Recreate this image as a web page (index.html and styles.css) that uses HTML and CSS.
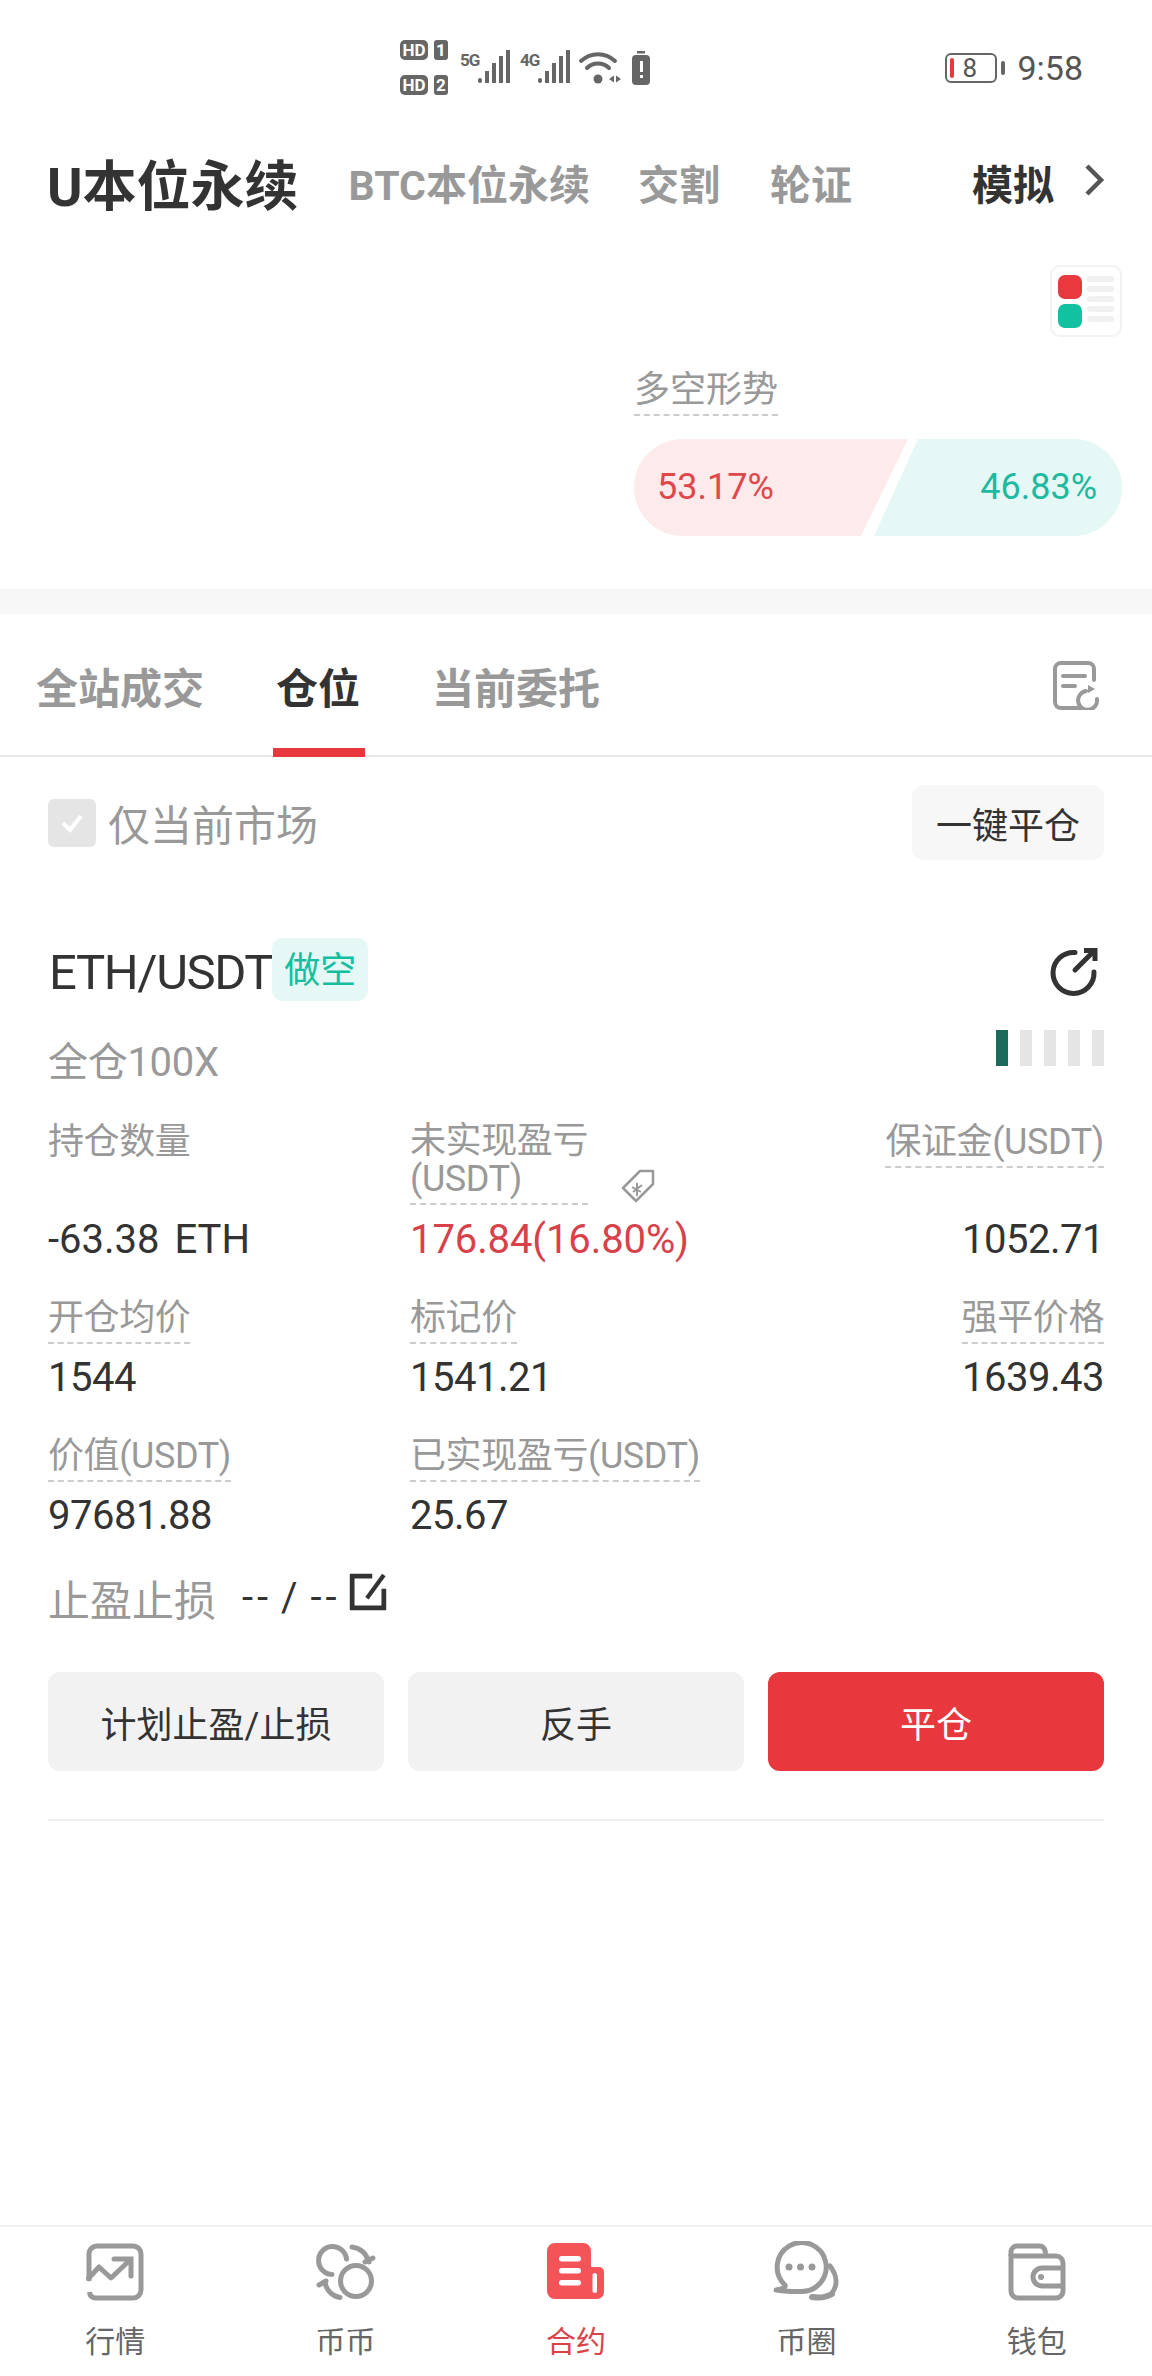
FILE: index.html
```html
<!DOCTYPE html>
<html lang="zh-CN">
<head>
<meta charset="utf-8">
<title>合约</title>
<link rel="stylesheet" href="styles.css">
</head>
<body>
<div class="page">
  <header class="status">
    <svg class="status-icons" width="256" height="60" viewBox="0 0 256 60">
      <g fill="#666">
        <rect x="0" y="0" width="28" height="20" rx="5"/><rect x="34" y="0" width="14" height="20" rx="3"/>
        <rect x="0" y="35" width="28" height="20" rx="5"/><rect x="34" y="35" width="14" height="20" rx="3"/>
        <rect x="78" y="38" width="4" height="5" rx="2"/><rect x="85" y="31" width="4" height="12"/><rect x="92" y="23" width="4" height="20"/><rect x="99" y="16" width="4" height="27"/><rect x="106" y="10" width="4" height="33"/>
        <rect x="138" y="38" width="4" height="5" rx="2"/><rect x="145" y="31" width="4" height="12"/><rect x="152" y="23" width="4" height="20"/><rect x="159" y="16" width="4" height="27"/><rect x="166" y="10" width="4" height="33"/>
        <circle cx="198" cy="39" r="4.500"/>
        <path d="M209 39l5-3.500v7zM216 35.500l5 3.500-5 3.500z"/>
        <rect x="232" y="15" width="18" height="30" rx="4"/><rect x="237" y="11" width="8" height="2.500"/>
      </g>
      <g fill="none" stroke="#666" stroke-width="4" stroke-linecap="round">
        <path d="M181 21c10-9 24-9 34 0"/><path d="M187 28c6-6 16-6 22 0"/>
      </g>
      <rect x="240" y="21" width="3" height="11" fill="#fff"/><rect x="240" y="35" width="3" height="3" fill="#fff"/>
      <g class="st-w"><text x="14" y="16">HD</text><text x="41" y="16">1</text><text x="14" y="51">HD</text><text x="41" y="51">2</text></g>
      <g class="st-g"><text x="60" y="26">5G</text><text x="120" y="26">4G</text></g>
    </svg>
    <div class="status-right">
      <span class="battery"><i class="battery-low"></i><b class="battery-num">8</b></span>
      <span class="battery-tip"></span>
      <span class="clock">9:58</span>
    </div>
  </header>

  <nav class="market-tabs">
    <span class="mt-active">U本位永续</span>
    <span class="mt-item mt-btc">BTC本位永续</span>
    <span class="mt-item mt-gap">交割</span>
    <span class="mt-item mt-gap2">轮证</span>
    <span class="mt-sim">模拟</span>
    <svg class="chevron" width="22" height="34" viewBox="0 0 22 34"><path d="M4 3l14 14L4 31" fill="none" stroke="#555" stroke-width="4.500"/></svg>
  </nav>

  <section class="sentiment">
    <div class="layout-btn-row">
      <span class="layout-btn">
        <span class="lb-blocks"><i class="lb-red"></i><i class="lb-green"></i></span>
        <span class="lb-lines"><i></i><i></i><i></i><i></i><i></i></span>
      </span>
    </div>
    <div class="sent-col">
      <span class="sent-label">多空形势</span>
      <div class="pill">
        <div class="pill-long">53.17%</div>
        <div class="pill-short">46.83%</div>
      </div>
    </div>
  </section>

  <div class="band"></div>

  <nav class="tabs">
    <span class="tab">全站成交</span>
    <span class="tab tab-on">仓位</span>
    <span class="tab">当前委托</span>
    <svg class="tab-doc" width="50" height="50" viewBox="0 0 50 50" fill="none" stroke="#999" stroke-width="4" stroke-linecap="round">
      <path d="M42 20V9a6 6 0 0 0-6-6H9a6 6 0 0 0-6 6v33a6 6 0 0 0 6 6h20"/>
      <path d="M11 16h22M11 26h12"/>
      <path d="M34 31a9.500 9.500 0 1 0 11 8"/>
      <path d="M36 25l7 4-7 4z" fill="#999" stroke="none"/>
    </svg>
  </nav>

  <div class="filter">
    <label class="check">
      <span class="check-box"><svg width="26" height="22" viewBox="0 0 26 22"><path d="M4 11l7 7L22 4" fill="none" stroke="#fff" stroke-width="4"/></svg></span>
      <span class="check-text">仅当前市场</span>
    </label>
    <button class="close-all">一键平仓</button>
  </div>

  <section class="position">
    <div class="pos-head">
      <span class="symbol">ETH/USDT</span>
      <span class="side">做空</span>
      <svg class="share" width="50" height="50" viewBox="0 0 50 50" fill="none" stroke="#333" stroke-width="5" stroke-linecap="round">
        <path d="M27 5.500A20.500 20.500 0 1 0 46 25"/>
        <path d="M27 23L46 4"/>
        <path d="M36 3.500h11V14" stroke-linecap="butt"/>
      </svg>
    </div>
    <div class="pos-sub">
      <span class="margin-type">全仓100X</span>
      <span class="risk"><i class="risk-on"></i><i></i><i></i><i></i><i></i></span>
    </div>

    <div class="grid">
      <div class="cell cell-tall">
        <div class="lbl-box lbl-two"><span class="lbl">持仓数量</span></div>
        <div class="val val-word">-63.38 ETH</div>
      </div>
      <div class="cell cell-tall">
        <div class="lbl-box lbl-two">
          <span class="lbl dash lbl-wrap">未实现盈亏<br>(USDT)</span>
          <svg class="tag" width="36" height="36" viewBox="0 0 36 36" fill="none" stroke="#999" stroke-width="2.500"><path d="M20 3h13v13L16 33 3 20z" stroke-linejoin="round"/><path d="M12 19l9 5M17 15v13M22 17l-9 7" stroke-width="2"/></svg>
        </div>
        <div class="val val-red">176.84(16.80%)</div>
      </div>
      <div class="cell cell-tall cell-r">
        <div class="lbl-box lbl-two"><span class="lbl dash">保证金(USDT)</span></div>
        <div class="val">1052.71</div>
      </div>

      <div class="cell"><div class="lbl-box"><span class="lbl dash">开仓均价</span></div><div class="val">1544</div></div>
      <div class="cell"><div class="lbl-box"><span class="lbl dash">标记价</span></div><div class="val">1541.21</div></div>
      <div class="cell cell-r"><div class="lbl-box"><span class="lbl dash">强平价格</span></div><div class="val">1639.43</div></div>

      <div class="cell"><div class="lbl-box"><span class="lbl dash">价值(USDT)</span></div><div class="val">97681.88</div></div>
      <div class="cell"><div class="lbl-box"><span class="lbl dash">已实现盈亏(USDT)</span></div><div class="val">25.67</div></div>
      <div class="cell"></div>
    </div>

    <div class="tpsl">
      <span class="tpsl-label">止盈止损</span>
      <span class="tpsl-val">-- / --</span>
      <svg class="edit" width="38" height="38" viewBox="0 0 36 36" fill="none" stroke="#333" stroke-width="4.500"><path d="M22 3H3v30h30V15"/><path d="M33 2L17 24" stroke-width="4"/></svg>
    </div>

    <div class="actions">
      <button class="act">计划止盈/止损</button>
      <button class="act">反手</button>
      <button class="act act-red">平仓</button>
    </div>
    <div class="rule"></div>
  </section>

  <footer class="bottom">
    <div class="nav-item">
      <svg width="58" height="58" viewBox="0 0 58 58" fill="none" stroke="#999" stroke-width="5"><path d="M3 38V11a8 8 0 0 1 8-8h36a8 8 0 0 1 8 8v36a8 8 0 0 1-8 8H10q-6 0-6.500-6"/><path d="M1 37l12-13 12 11 20-19" stroke-linejoin="round"/><path d="M28 16h17v17" stroke-linecap="round"/></svg>
      <span class="nav-text">行情</span>
    </div>
    <div class="nav-item">
      <svg width="60" height="58" viewBox="0 0 60 58" fill="none" stroke="#999" stroke-width="5" stroke-linecap="round"><circle cx="40" cy="38" r="15.500"/><path d="M30.500 16A14 14 0 1 0 16 31.500"/><path d="M36 4c8 1 14 6 17 15"/><path d="M49 19l8-4"/><path d="M9 39c1 8 7 14 15 15.500"/><path d="M3 42l7-4"/></svg>
      <span class="nav-text">币币</span>
    </div>
    <div class="nav-item nav-on">
      <svg width="58" height="58" viewBox="0 0 58 58"><path d="M8 0h28a8 8 0 0 1 8 8v16h8a5 5 0 0 1 5 5v20a7 7 0 0 1-7 7H8a8 8 0 0 1-8-8V8a8 8 0 0 1 8-8z" fill="#f45358"/><rect x="12" y="13" width="22" height="5.500" rx="2.700" fill="#fff"/><rect x="12" y="25" width="22" height="5.500" rx="2.700" fill="#fff"/><rect x="12" y="37" width="22" height="5.500" rx="2.700" fill="#fff"/><rect x="45.500" y="30" width="4.500" height="20" rx="2" fill="#fff"/></svg>
      <span class="nav-text">合约</span>
    </div>
    <div class="nav-item">
      <svg class="nav-wide" width="68" height="62" viewBox="0 0 68 62" fill="none" stroke="#999" stroke-width="5" stroke-linecap="round"><path d="M13 44A24.500 24.500 0 1 1 28 50.500C21 51 12 50 4 49 10 48 14 47 13 44z" stroke-linejoin="round"/><path d="M58 25c7 9 8 19 2 27"/><path d="M60 53c-7 4-14 4-20 3" stroke-width="6"/><circle cx="17" cy="26" r="3.500" fill="#999" stroke="none"/><circle cx="28.500" cy="26" r="3.500" fill="#999" stroke="none"/><circle cx="40" cy="26" r="3.500" fill="#999" stroke="none"/></svg>
      <span class="nav-text">币圈</span>
    </div>
    <div class="nav-item">
      <svg width="58" height="58" viewBox="0 0 58 58" fill="none" stroke="#999" stroke-width="5"><path d="M3 13V9a6 6 0 0 1 6-6h22a6 6 0 0 1 6 8"/><path d="M3 11v37a7 7 0 0 0 7 7h38a7 7 0 0 0 7-7V20a7 7 0 0 0-7-7H4"/><path d="M54 25H34a9 9 0 0 0 0 18h20"/><circle cx="33" cy="34" r="3" fill="#999" stroke="none"/></svg>
      <span class="nav-text">钱包</span>
    </div>
  </footer>
</div>
</body>
</html>
```

FILE: styles.css
```css
* { box-sizing: border-box; }
html, body { margin: 0; padding: 0; background: #fff; }
body { font-family: Roboto, "Noto Sans CJK SC", sans-serif; color: #333; }
i { display: block; }
button { font-family: inherit; border: 0; padding: 0; }

.page { width: 1152px; height: 2376px; display: flex; flex-direction: column; overflow: hidden; }

/* status bar */
.status { height: 136px; display: flex; align-items: flex-start; padding: 40px 69px 0 400px; justify-content: space-between; flex: none; }
.status-icons { display: block; }
.st-w text { font: 700 17px Roboto, sans-serif; fill: #fff; text-anchor: middle; }
.st-g text { font: 700 17px Roboto, sans-serif; fill: #666; letter-spacing: -1px; }
.status-right { display: flex; align-items: center; margin-top: 13px; height: 30px; }
.battery { width: 52px; height: 30px; border: 2px solid #666; border-radius: 6px; display: flex; align-items: center; padding-left: 3px; }
.battery-low { width: 4px; height: 20px; background: #e8383d; border-radius: 2px; }
.battery-num { font: 400 26px Roboto, sans-serif; color: #555; margin-left: 8px; }
.battery-tip { width: 4px; height: 14px; background: #666; border-radius: 2px; margin-left: 4px; }
.clock { font-size: 34px; color: #555; margin-left: 12px; }

/* market tabs */
.market-tabs { height: 100px; flex: none; display: flex; align-items: center; padding: 0 0 8px 47px; }
.mt-active { font-size: 54px; font-weight: 700; color: #333; }
.mt-item { font-size: 41px; font-weight: 700; color: #999; }
.mt-btc { margin-left: 50px; }
.mt-gap { margin-left: 48px; }
.mt-gap2 { margin-left: 50px; }
.mt-sim { font-size: 41px; font-weight: 700; color: #333; margin-left: 120px; }
.chevron { margin-left: 29px; margin-top: -4px; }

/* sentiment */
.sentiment { height: 353px; flex: none; padding: 29px 30px 0 0; display: flex; flex-direction: column; align-items: flex-end; }
.layout-btn-row { height: 72px; }
.layout-btn { width: 72px; height: 72px; border: 2px solid #f2f2f2; border-radius: 10px; display: flex; padding: 7px 6px; gap: 5px; }
.lb-blocks { display: flex; flex-direction: column; gap: 5px; padding-top: 1px; }
.lb-blocks i { width: 24px; height: 24px; border-radius: 7px; }
.lb-red { background: #e83a3e; }
.lb-green { background: #12c19f; }
.lb-lines { flex: 1; display: flex; flex-direction: column; justify-content: space-between; padding: 2px 0 6px; }
.lb-lines i { height: 6px; background: #f0f0f0; border-radius: 3px; }
.sent-col { width: 488px; margin-top: 32px; }
.sent-label { display: inline-block; font-size: 36px; line-height: 42px; height: 47px; color: #999; border-bottom: 2px dashed #ccc; }
.pill { display: flex; margin-top: 23px; height: 97px; font-size: 36px; line-height: 97px; }
.pill-long { width: 274px; flex: none; background: #fdeaea; color: #e0474c; border-radius: 49px 0 0 49px; padding-left: 23px; clip-path: polygon(0 0, 100% 0, 82.8% 100%, 0 100%); }
.pill-short { flex: 1; margin-left: -34px; background: #e5f8f5; color: #1db9a0; border-radius: 0 49px 49px 0; text-align: right; padding-right: 25px; clip-path: polygon(17.7% 0, 100% 0, 100% 100%, 0 100%); }

.band { height: 25px; flex: none; background: #f7f7f7; }

/* tabs */
.tabs { height: 143px; flex: none; display: flex; align-items: stretch; padding: 0 50px 0 36px; border-bottom: 2px solid #e8e8e8; }
.tab { font-size: 42px; font-weight: 700; color: #999; padding-top: 46px; line-height: 60px; position: relative; margin-right: 72px; }
.tab-on { color: #333; }
.tab-on::after { content: ""; position: absolute; left: -3px; right: -5px; bottom: -2px; height: 9px; background: #e8383d; }
.tab-doc { margin-left: auto; margin-top: 46px; }

/* filter */
.filter { height: 122px; flex: none; display: flex; justify-content: space-between; padding: 28px 48px 0; }
.check { display: flex; align-items: flex-start; }
.check-box { width: 48px; height: 48px; margin-top: 14px; background: #e5e5e5; border-radius: 6px; display: flex; align-items: center; justify-content: center; }
.check-text { font-size: 42px; color: #999; margin-left: 12px; line-height: 84px; }
.close-all { width: 192px; height: 75px; background: #f7f7f7; border-radius: 12px; font-size: 36px; color: #333; }

/* position */
.position { padding: 0 48px; flex: none; }
.pos-head { height: 64px; margin-top: 59px; display: flex; align-items: flex-start; }
.symbol { font-size: 49px; margin-left: 1px; letter-spacing: -1.4px; line-height: 70px; }
.side { width: 96px; height: 63px; background: #e5f8f5; color: #14bfa0; font-size: 36px; line-height: 66px; text-align: center; border-radius: 10px; }
.share { margin-left: auto; margin-right: 6px; margin-top: 9px; }
.pos-sub { height: 62px; margin-top: 28px; display: flex; justify-content: space-between; align-items: flex-start; }
.margin-type { font-size: 40px; color: #999; line-height: 66px; letter-spacing: -.3px; }
.risk { display: flex; gap: 12px; }
.risk i { width: 12px; height: 36px; background: #e5e5e5; }
.risk .risk-on { background: #1b6b5c; }

.grid { display: grid; grid-template-columns: 362px 1fr auto; margin-top: 29px; }
.cell { height: 138px; }
.cell-tall { height: 176px; }
.cell-r { text-align: right; }
.lbl-box { height: 56px; position: relative; }
.lbl-two { height: 94px; }
.lbl { display: inline-block; font-size: 36px; line-height: 42px; color: #999; letter-spacing: -.4px; padding-bottom: 3px; }
.dash { border-bottom: 2px dashed #ccc; }
.lbl-wrap { line-height: 38px; width: 178px; white-space: nowrap; padding-bottom: 5px; margin-top: 1px; }
.tag { position: absolute; left: 210px; top: 47px; }
.val { font-size: 40px; line-height: 50px; color: #333; letter-spacing: -.5px; }
.val-word { word-spacing: 5px; letter-spacing: 0; }
.val-red { color: #d9414a; letter-spacing: -.1px; }

.tpsl { height: 52px; display: flex; align-items: center; margin-top: -2px; }
.tpsl-label { font-size: 42px; color: #999; }
.tpsl-val { font-size: 40px; color: #333; margin-left: 26px; letter-spacing: 4px; word-spacing: -5px; }
.edit { margin-left: 8px; margin-top: -10px; }

.actions { display: grid; grid-template-columns: repeat(3, 336px); justify-content: space-between; margin-top: 49px; }
.act { height: 99px; background: #f2f2f2; border-radius: 12px; font-size: 36px; color: #333; }
.act-red { background: #e8383d; color: #fff; }
.rule { height: 2px; background: #f0f0f0; margin-top: 48px; }

/* bottom nav */
.bottom { margin-top: auto; height: 151px; flex: none; border-top: 2px solid #f0f0f0; display: grid; grid-template-columns: repeat(5, 1fr); }
.nav-item { display: flex; flex-direction: column; align-items: center; padding-top: 16px; }
.nav-item svg { display: block; height: 58px; flex: none; }
.nav-item .nav-wide { height: 62px; margin-top: -2px; margin-bottom: -2px; }
.nav-text { font-size: 30px; line-height: 40px; color: #666; margin-top: 21px; }
.nav-on .nav-text { color: #d9434a; }
```
